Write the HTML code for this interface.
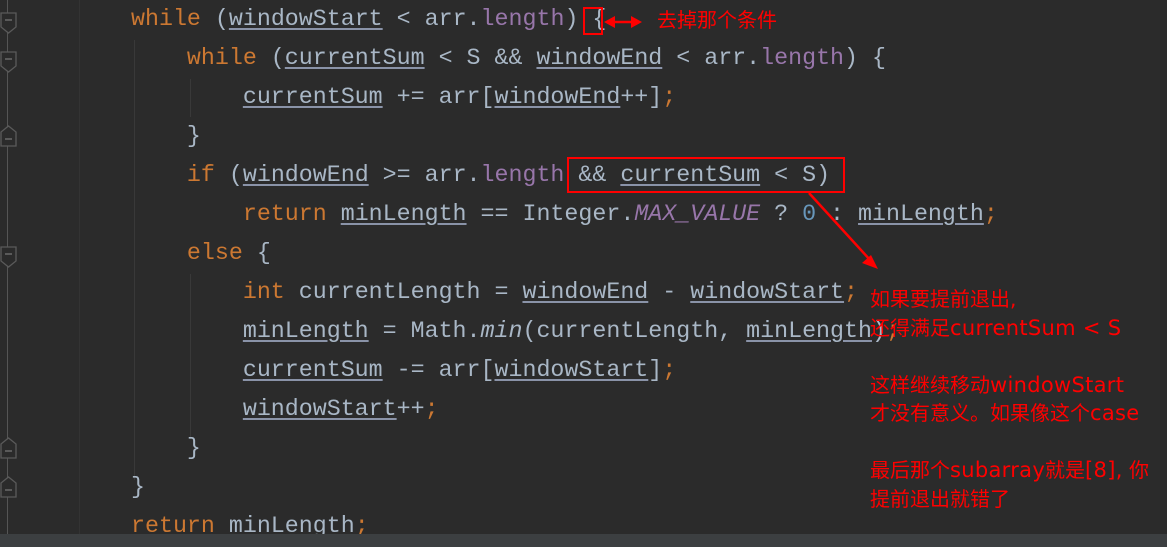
<!DOCTYPE html>
<html><head><meta charset="utf-8"><style>
body{margin:0;width:1167px;height:547px;background:#2b2b2b;overflow:hidden;position:relative;font-family:"Liberation Mono",monospace}
.code{position:absolute;left:131px;top:0;font-size:23.3px;line-height:39px;color:#a9b7c6;white-space:pre}
.k{color:#cc7832}.p{color:#9876aa}.n{color:#6897bb}.i{font-style:italic}
.u{text-decoration:underline;text-decoration-color:#8a93a8;text-underline-offset:3px}
.ann{position:absolute;color:#ff0000;font-family:"DejaVu Sans","Noto Sans CJK SC",sans-serif;font-size:20px;line-height:28.5px;white-space:pre}
.ann .l{font-size:21px;letter-spacing:0.3px}
.box{position:absolute;border:2px solid #ff0000}
.bar{position:absolute;left:0;top:534px;width:1167px;height:13px;background:#3c3f41}
.vl{position:absolute;width:1px;background:#3a3a3a}
</style></head><body>
<div class="vl" style="left:7px;top:0;height:534px;background:#555"></div>
<div class="vl" style="left:79px;top:0;height:534px;background:#333"></div>
<div class="vl" style="left:134px;top:40px;height:440px;background:#393939"></div>
<div class="vl" style="left:190px;top:79px;height:38px;background:#393939"></div>
<div class="vl" style="left:190px;top:274px;height:165px;background:#393939"></div>
<svg style="position:absolute;left:0;top:0" width="20" height="547">
<g fill="#2b2b2b" stroke="#5a5a5a" stroke-width="1.3">
<path d="M1 13h15v14l-7.5 6l-7.5-6z"/><path d="M1 52h15v14l-7.5 6l-7.5-6z"/>
<path d="M1 146h15v-14l-7.5-6l-7.5 6z"/><path d="M1 247h15v14l-7.5 6l-7.5-6z"/>
<path d="M1 458h15v-14l-7.5-6l-7.5 6z"/><path d="M1 497h15v-14l-7.5-6l-7.5 6z"/>
</g>
<g stroke="#777" stroke-width="1.3"><path d="M5 20h7M5 59h7M5 139h7M5 254h7M5 451h7M5 490h7"/></g>
</svg>
<div class="code"><span class="k">while</span> (<span class="u">windowStart</span> &lt; arr.<span class="p">length</span>) {
    <span class="k">while</span> (<span class="u">currentSum</span> &lt; S &amp;&amp; <span class="u">windowEnd</span> &lt; arr.<span class="p">length</span>) {
        <span class="u">currentSum</span> += arr[<span class="u">windowEnd</span>++]<span class="k">;</span>
    }
    <span class="k">if</span> (<span class="u">windowEnd</span> &gt;= arr.<span class="p">length</span> &amp;&amp; <span class="u">currentSum</span> &lt; S)
        <span class="k">return</span> <span class="u">minLength</span> == Integer.<span class="p i">MAX_VALUE</span> ? <span class="n">0</span> : <span class="u">minLength</span><span class="k">;</span>
    <span class="k">else</span> {
        <span class="k">int</span> currentLength = <span class="u">windowEnd</span> - <span class="u">windowStart</span><span class="k">;</span>
        <span class="u">minLength</span> = Math.<span class="i">min</span>(currentLength, <span class="u">minLength</span>)<span class="k">;</span>
        <span class="u">currentSum</span> -= arr[<span class="u">windowStart</span>]<span class="k">;</span>
        <span class="u">windowStart</span>++<span class="k">;</span>
    }
}
<span class="k">return</span> minLength<span class="k">;</span></div>
<div class="bar"></div>
<div class="box" style="left:583px;top:7px;width:16px;height:24px"></div>
<div class="box" style="left:567px;top:157px;width:274px;height:32px"></div>
<svg style="position:absolute;left:0;top:0" width="1167" height="547">
<g stroke="#ff0000" stroke-width="2.5" fill="#ff0000">
<path d="M612 22h22"/><path d="M604 22l11-6v12z" stroke="none"/><path d="M642 22l-11-6v12z" stroke="none"/>
<path d="M809 193l62 68"/><path d="M878 269l-16-6 9-8z" stroke="none"/>
</g></svg>
<div class="ann" style="left:657px;top:6px">去掉那个条件</div>
<div class="ann" style="left:870px;top:285px">如果要提前退出,
还得满足<span class="l">currentSum &lt; S</span>

这样继续移动<span class="l">windowStart</span>
才没有意义。如果像这个<span class="l">case</span>

最后那个<span class="l">subarray</span>就是<span class="l">[8],</span> 你
提前退出就错了</div>
</body></html>
